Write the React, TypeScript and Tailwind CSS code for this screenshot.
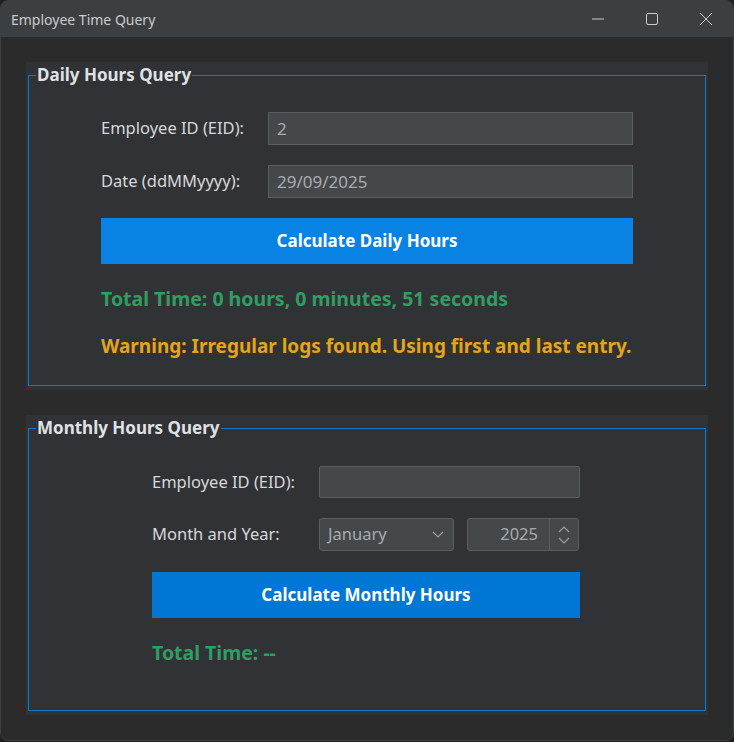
import type { ReactNode } from "react"

const font = { fontFamily: '"Noto Sans", "Open Sans", sans-serif' }

function GroupPanel(props: { title: string; children: ReactNode; className?: string }) {
  return (
    <div className={`bg-[#313235] px-[2px] pt-[13px] pb-[4px] ${props.className ?? ""}`}>
      <div className="relative h-full border border-[#0a7ad6]">
        <div className="absolute -top-[14px] left-[7px] bg-[#313235] px-[1px] text-[17px] font-bold leading-[26px] text-[#dfe1e5]">
          {props.title}
        </div>
        {props.children}
      </div>
    </div>
  )
}

function Field(props: { value: string; className?: string }) {
  return (
    <div
      className={`flex items-center border border-[#5b5e61] bg-[#45484a] px-[8px] text-[17px] text-[#a9abae] ${props.className ?? ""}`}
    >
      {props.value}
    </div>
  )
}

function Chevron(props: { up?: boolean; className?: string }) {
  return (
    <svg width="12" height="7" viewBox="0 0 12 7" className={props.className}>
      <path
        d={props.up ? "M1 6L6 1L11 6" : "M1 1L6 6L11 1"}
        fill="none"
        stroke="#9a9da0"
        strokeWidth="1.2"
      />
    </svg>
  )
}

export default function App() {
  return (
    <div className="h-[742px] w-[734px] bg-[#1f2022]" style={font}>
      <div className="flex h-[741px] w-[734px] flex-col overflow-hidden rounded-[8px] border border-[#3d3f42] bg-[#2b2b2b]">
        {/* title bar */}
        <div className="flex h-[36px] shrink-0 items-center bg-[#3c3f41] pl-[10px]">
          <span className="text-[14px] text-[#c9cbcd]">Employee Time Query</span>
          <div className="ml-auto flex h-full items-center">
            <div className="flex h-full w-[54px] items-center justify-center">
              <svg width="12" height="2" viewBox="0 0 12 2">
                <path d="M0 1H12" stroke="#c9cbcd" strokeWidth="1" />
              </svg>
            </div>
            <div className="flex h-full w-[54px] items-center justify-center">
              <svg width="12" height="12" viewBox="0 0 12 12">
                <rect x="0.5" y="0.5" width="11" height="11" rx="1.5" fill="none" stroke="#c9cbcd" strokeWidth="1" />
              </svg>
            </div>
            <div className="flex h-full w-[54px] items-center justify-center">
              <svg width="14" height="14" viewBox="0 0 14 14">
                <path d="M1 1L13 13M13 1L1 13" stroke="#c9cbcd" strokeWidth="1" />
              </svg>
            </div>
          </div>
        </div>

        <div className="flex flex-col gap-[25px] pl-[25px] pr-[25px] pt-[25px]">
          <GroupPanel title="Daily Hours Query" className="h-[328px]">
            <div className="flex flex-col px-[72px] pt-[36px]">
              <div className="flex items-center">
                <span className="w-[167px] text-[16.5px] text-[#d6d8da]">Employee ID (EID):</span>
                <Field value="2" className="h-[33px] flex-1" />
              </div>
              <div className="mt-[20px] flex items-center">
                <span className="w-[167px] text-[16.5px] text-[#d6d8da]">Date (ddMMyyyy):</span>
                <Field value="29/09/2025" className="h-[33px] flex-1" />
              </div>
              <button className="mt-[20px] h-[46px] w-full bg-[#0883e4] text-[17px] font-bold text-white">
                Calculate Daily Hours
              </button>
              <div className="mt-[21px] text-[19.5px] font-bold leading-[28px] text-[#2e9e62]">
                Total Time: 0 hours, 0 minutes, 51 seconds
              </div>
              <div className="mt-[19px] text-[19px] font-bold leading-[28px] text-[#e3a51c]">
                Warning: Irregular logs found. Using first and last entry.
              </div>
            </div>
          </GroupPanel>

          <GroupPanel title="Monthly Hours Query" className="h-[300px]">
            <div className="flex flex-col pl-[123px] pr-[125px] pt-[37px]">
              <div className="flex items-center">
                <span className="w-[167px] text-[16.5px] text-[#d6d8da]">Employee ID (EID):</span>
                <Field value="" className="h-[32px] flex-1 rounded-[2px]" />
              </div>
              <div className="mt-[20px] flex items-center">
                <span className="w-[167px] text-[16.5px] text-[#d6d8da]">Month and Year:</span>
                <div className="flex h-[33px] w-[135px] items-center justify-between rounded-[3px] border border-[#5b5e61] bg-[#45484a] pl-[8px] pr-[9px] text-[16.5px] text-[#a9abae]">
                  <span>January</span>
                  <Chevron />
                </div>
                <div className="ml-[13px] flex h-[33px] w-[112px] items-stretch rounded-[3px] border border-[#5b5e61] bg-[#45484a] text-[16.5px] text-[#a9abae]">
                  <span className="flex flex-1 items-center justify-end pr-[11px]">2025</span>
                  <div className="flex w-[29px] flex-col items-center justify-center gap-[4px] border-l border-[#5b5e61]">
                    <Chevron up />
                    <Chevron />
                  </div>
                </div>
              </div>
              <button className="mt-[21px] h-[46px] w-full bg-[#0077d4] text-[17px] font-bold text-white">
                Calculate Monthly Hours
              </button>
              <div className="mt-[21px] text-[19.5px] font-bold leading-[28px] text-[#2e9e62]">
                Total Time: --
              </div>
            </div>
          </GroupPanel>
        </div>
      </div>
    </div>
  )
}
